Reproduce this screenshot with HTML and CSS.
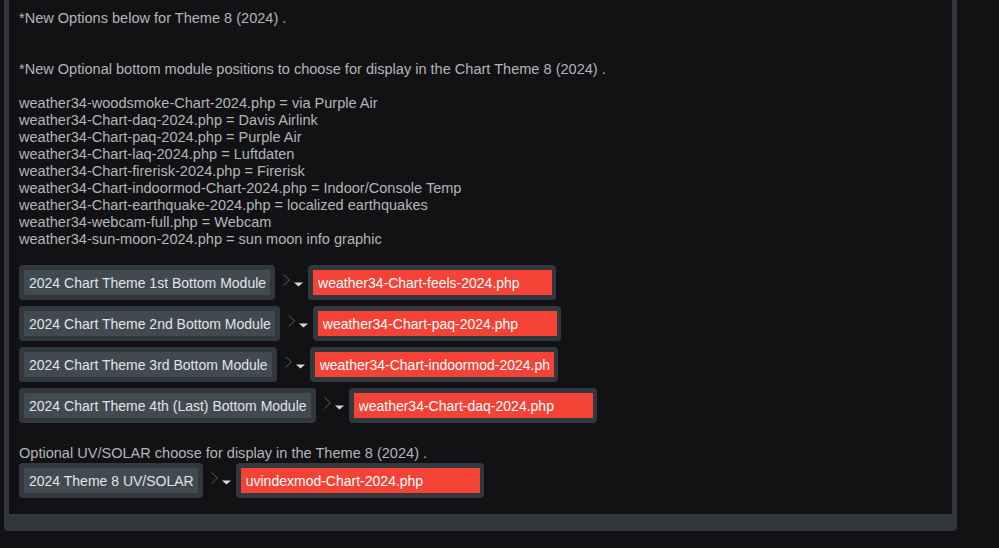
FILE: index.html
```html
<!DOCTYPE html>
<html>
<head>
<meta charset="utf-8">
<link rel="stylesheet" href="styles.css">
</head>
<body>
<div class="panel">
  <div class="content">
    <p class="line">*New Options below for Theme 8 (2024) .</p>
    <p class="line gap2">*New Optional bottom module positions to choose for display in the Chart Theme 8 (2024) .</p>
    <div class="list gap1">
      <p class="line">weather34-woodsmoke-Chart-2024.php = via Purple Air</p>
      <p class="line">weather34-Chart-daq-2024.php = Davis Airlink</p>
      <p class="line">weather34-Chart-paq-2024.php = Purple Air</p>
      <p class="line">weather34-Chart-laq-2024.php = Luftdaten</p>
      <p class="line">weather34-Chart-firerisk-2024.php = Firerisk</p>
      <p class="line">weather34-Chart-indoormod-Chart-2024.php = Indoor/Console Temp</p>
      <p class="line">weather34-Chart-earthquake-2024.php = localized earthquakes</p>
      <p class="line">weather34-webcam-full.php = Webcam</p>
      <p class="line">weather34-sun-moon-2024.php = sun moon info graphic</p>
    </div>
    <div class="rows gap1">
      <div class="row">
        <div class="label"><span class="label-inner">2024 Chart Theme 1st Bottom Module</span></div>
        <svg class="arrow" width="33" height="35" viewBox="0 0 33 35"><path d="M8.5 9.5 L14.5 15 L8.5 20.5" fill="none" stroke="#5a6066" stroke-width="1"/><path d="M19 17.5 H28 L23.5 21.5 Z" fill="#d8d8d8"/></svg>
        <div class="field"><div class="field-inner"><span class="field-text">weather34-Chart-feels-2024.php</span></div></div>
      </div>
      <div class="row">
        <div class="label"><span class="label-inner">2024 Chart Theme 2nd Bottom Module</span></div>
        <svg class="arrow" width="33" height="35" viewBox="0 0 33 35"><path d="M8.5 9.5 L14.5 15 L8.5 20.5" fill="none" stroke="#5a6066" stroke-width="1"/><path d="M19 17.5 H28 L23.5 21.5 Z" fill="#d8d8d8"/></svg>
        <div class="field"><div class="field-inner"><span class="field-text">weather34-Chart-paq-2024.php</span></div></div>
      </div>
      <div class="row">
        <div class="label"><span class="label-inner">2024 Chart Theme 3rd Bottom Module</span></div>
        <svg class="arrow" width="33" height="35" viewBox="0 0 33 35"><path d="M8.5 9.5 L14.5 15 L8.5 20.5" fill="none" stroke="#5a6066" stroke-width="1"/><path d="M19 17.5 H28 L23.5 21.5 Z" fill="#d8d8d8"/></svg>
        <div class="field"><div class="field-inner"><span class="field-text">weather34-Chart-indoormod-2024.php</span></div></div>
      </div>
      <div class="row">
        <div class="label"><span class="label-inner">2024 Chart Theme 4th (Last) Bottom Module</span></div>
        <svg class="arrow" width="33" height="35" viewBox="0 0 33 35"><path d="M8.5 9.5 L14.5 15 L8.5 20.5" fill="none" stroke="#5a6066" stroke-width="1"/><path d="M19 17.5 H28 L23.5 21.5 Z" fill="#d8d8d8"/></svg>
        <div class="field"><div class="field-inner"><span class="field-text">weather34-Chart-daq-2024.php</span></div></div>
      </div>
    </div>
    <p class="line uv">Optional UV/SOLAR choose for display in the Theme 8 (2024) .</p>
    <div class="rows">
      <div class="row">
        <div class="label"><span class="label-inner">2024 Theme 8 UV/SOLAR</span></div>
        <svg class="arrow" width="33" height="35" viewBox="0 0 33 35"><path d="M8.5 9.5 L14.5 15 L8.5 20.5" fill="none" stroke="#5a6066" stroke-width="1"/><path d="M19 17.5 H28 L23.5 21.5 Z" fill="#d8d8d8"/></svg>
        <div class="field"><div class="field-inner"><span class="field-text">uvindexmod-Chart-2024.php</span></div></div>
      </div>
    </div>
  </div>
</div>
</body>
</html>
```

FILE: styles.css
```css
html, body {
  margin: 0;
  padding: 0;
  background: #121215;
  font-family: "Liberation Sans", Arial, sans-serif;
  font-size: 14px;
  color: #b3b5b8;
}

.panel {
  margin-left: 4px;
  width: 943px;
  background: #30373d;
  padding: 0 5px 17px 5px;
  border-radius: 0 0 4px 4px;
}

.content {
  background: #121215;
  padding: 10px 10px 16px 10px;
}

.line {
  margin: 0;
  font-size: 14.55px;
  line-height: 17px;
  white-space: nowrap;
}

.gap2 {
  margin-top: 34px;
}

.gap1 {
  margin-top: 17px;
}

.rows {
  display: flex;
  flex-direction: column;
  align-items: flex-start;
  gap: 6px;
}

.row {
  display: flex;
  align-items: flex-start;
  height: 35px;
}

.label {
  background: #31383e;
  border-radius: 4px;
  padding: 5px;
}

.label-inner {
  display: block;
  background: #424a51;
  color: #e2e4e6;
  height: 25px;
  line-height: 26px;
  padding: 0 4px 0 5px;
  white-space: nowrap;
  border-radius: 1px;
}

.arrow {
  display: block;
  flex: none;
}

.field {
  background: #31383e;
  border-radius: 4px;
  padding: 5px 4px 5px 5px;
}

.field-inner {
  width: 230px;
  height: 25px;
  padding: 0 4px 0 5px;
  background: #f44336;
}

.field-text {
  display: block;
  height: 25px;
  line-height: 26px;
  color: #ffffff;
  white-space: nowrap;
  overflow: hidden;
}

.uv {
  margin-top: 22px;
  margin-bottom: 1px;
}
```
